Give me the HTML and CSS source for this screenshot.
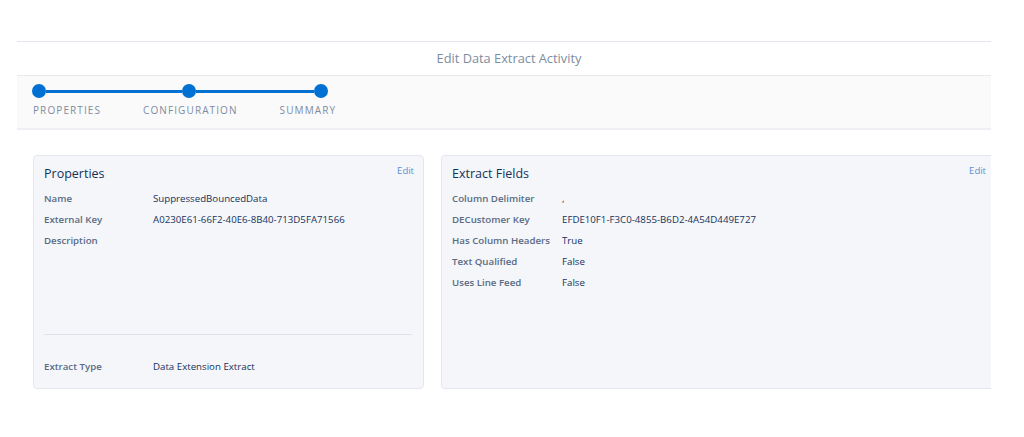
FILE: index.html
```html
<!DOCTYPE html>
<html>
<head>
<meta charset="utf-8">
<link rel="stylesheet" href="styles.css">
</head>
<body>
<div class="wrap">
  <div class="header">Edit Data Extract Activity</div>
  <div class="progress">
    <div class="track">
      <span class="dot"></span><span class="seg seg1"></span><span class="dot"></span><span class="seg seg2"></span><span class="dot"></span>
    </div>
    <div class="steps">
      <span>PROPERTIES</span><span>CONFIGURATION</span><span>SUMMARY</span>
    </div>
  </div>
  <div class="cards">
    <div class="card card-left">
      <div class="card-head"><span class="card-title">Properties</span><a class="edit">Edit</a></div>
      <div class="row"><span class="lbl">Name</span><span class="val">SuppressedBouncedData</span></div>
      <div class="row"><span class="lbl">External Key</span><span class="val">A0230E61-66F2-40E6-8B40-713D5FA71566</span></div>
      <div class="row"><span class="lbl">Description</span><span class="val"></span></div>
      <div class="divider"></div>
      <div class="row"><span class="lbl">Extract Type</span><span class="val">Data Extension Extract</span></div>
    </div>
    <div class="card card-right">
      <div class="card-head"><span class="card-title">Extract Fields</span><a class="edit">Edit</a></div>
      <div class="row"><span class="lbl">Column Delimiter</span><span class="val">,</span></div>
      <div class="row"><span class="lbl">DECustomer Key</span><span class="val">EFDE10F1-F3C0-4855-B6D2-4A54D449E727</span></div>
      <div class="row"><span class="lbl">Has Column Headers</span><span class="val">True</span></div>
      <div class="row"><span class="lbl">Text Qualified</span><span class="val">False</span></div>
      <div class="row"><span class="lbl">Uses Line Feed</span><span class="val">False</span></div>
    </div>
  </div>
</div>
</body>
</html>
```
FILE: styles.css
```css
* { box-sizing: border-box; }
html, body { margin: 0; padding: 0; background: #fff; }
body { font-family: "Open Sans", "Noto Sans", sans-serif; color: #16325c; }
.wrap { margin: 41px 0 0 17px; width: 974px; }
.header {
  border-top: 1px solid #e3e6ec;
  height: 34px;
  line-height: 32px;
  text-align: center;
  padding-left: 10px;
  font-size: 12.8px;
  color: #7e8ca0;
}
.progress {
  background: #fafafa;
  border-top: 1px solid #e8eaee;
  border-bottom: 2px solid #eef0f3;
  height: 55px;
  padding: 8px 0 0 15px;
}
.track { display: flex; align-items: center; height: 14px; }
.dot { width: 14px; height: 14px; border-radius: 50%; background: #0070d2; flex: none; }
.seg { height: 3px; background: #0070d2; flex: none; }
.seg1 { width: 136px; }
.seg2 { width: 118px; }
.steps {
  display: flex; gap: 42px; margin-top: 5px; padding-left: 1px;
  font-size: 10px; letter-spacing: 1.1px; color: #7e8ca0; line-height: 14px;
}
.cards { display: flex; gap: 17px; margin-top: 25px; padding-left: 16px; }
.card {
  background: #f4f6f9;
  border: 1px solid #e4e8ee;
  border-radius: 4px;
  height: 234px;
  padding: 5px 9px 11px 10px;
  display: flex; flex-direction: column;
}
.card-left { width: 391px; }
.card-right { flex: 1; border-right: none; border-radius: 4px 0 0 4px; padding-right: 5px; }
.card-head { display: flex; justify-content: space-between; align-items: flex-start; height: 22px; margin-bottom: 5px; }
.card-title { font-size: 12.5px; line-height: 22px; padding-top: 2px; color: #16325c; }
.edit { font-size: 9.5px; color: #5b8fd6; line-height: 14px; padding-top: 3px; }
.row { display: flex; height: 21px; line-height: 21px; font-size: 9.7px; }
.lbl { width: 109px; flex: none; color: #5a6b85; font-weight: 600; }
.card-right .lbl { width: 110px; }
.val { color: #16325c; }
.divider { margin-top: auto; border-top: 1px solid #dde1e8; margin-bottom: 21px; margin-right: 2px; }
```
